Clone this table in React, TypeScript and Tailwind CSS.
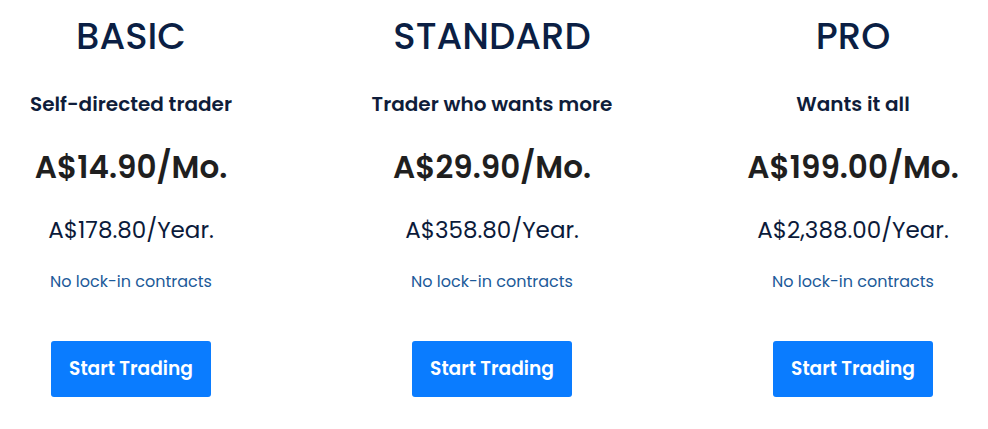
import React from "react";

interface IPlan {
  name: string;
  tagline: string;
  monthly: string;
  yearly: string;
}

const plans: IPlan[] = [
  {name: "BASIC", tagline: "Self-directed trader", monthly: "A$14.90/Mo.", yearly: "A$178.80/Year."},
  {name: "STANDARD", tagline: "Trader who wants more", monthly: "A$29.90/Mo.", yearly: "A$358.80/Year."},
  {name: "PRO", tagline: "Wants it all", monthly: "A$199.00/Mo.", yearly: "A$2,388.00/Year."},
];

const PlanColumn: React.FC<{plan: IPlan}> = ({plan}) => {
  return (
    <div className="flex flex-col items-center text-center">
      {/* plan name */}
      <h2 className="text-[37px] leading-[44px] font-medium text-[#0b1f44]">{plan.name}</h2>

      <p className="mt-[34px] text-[20px] leading-[24px] font-semibold text-[#0f1d3a]">{plan.tagline}</p>

      {/* prices */}
      <p className="mt-[33px] text-[31px] leading-[36px] font-semibold text-[#1f1f1f]">{plan.monthly}</p>
      <p className="mt-[30px] text-[23px] leading-[30px] font-normal text-[#0b1a3a]">{plan.yearly}</p>

      <p className="mt-[25px] text-[16px] leading-[24px] text-[#1d5a99]">No lock-in contracts</p>

      <button className="mt-[47px] w-[160px] h-[56px] rounded-[3px] bg-[#0a7cff] text-white text-[18.6px] font-semibold">
        Start Trading
      </button>
    </div>
  );
};

export default function App() {
  return (
    <div
      className="w-[988px] h-[429px] bg-white pt-[14px]"
      style={{fontFamily: "Poppins, 'Open Sans', 'Liberation Sans', sans-serif"}}
    >
      <div className="grid grid-cols-[262px_262px_262px] gap-x-[99px]">
        {plans.map((p) => (
          <PlanColumn key={p.name} plan={p} />
        ))}
      </div>
    </div>
  );
}
